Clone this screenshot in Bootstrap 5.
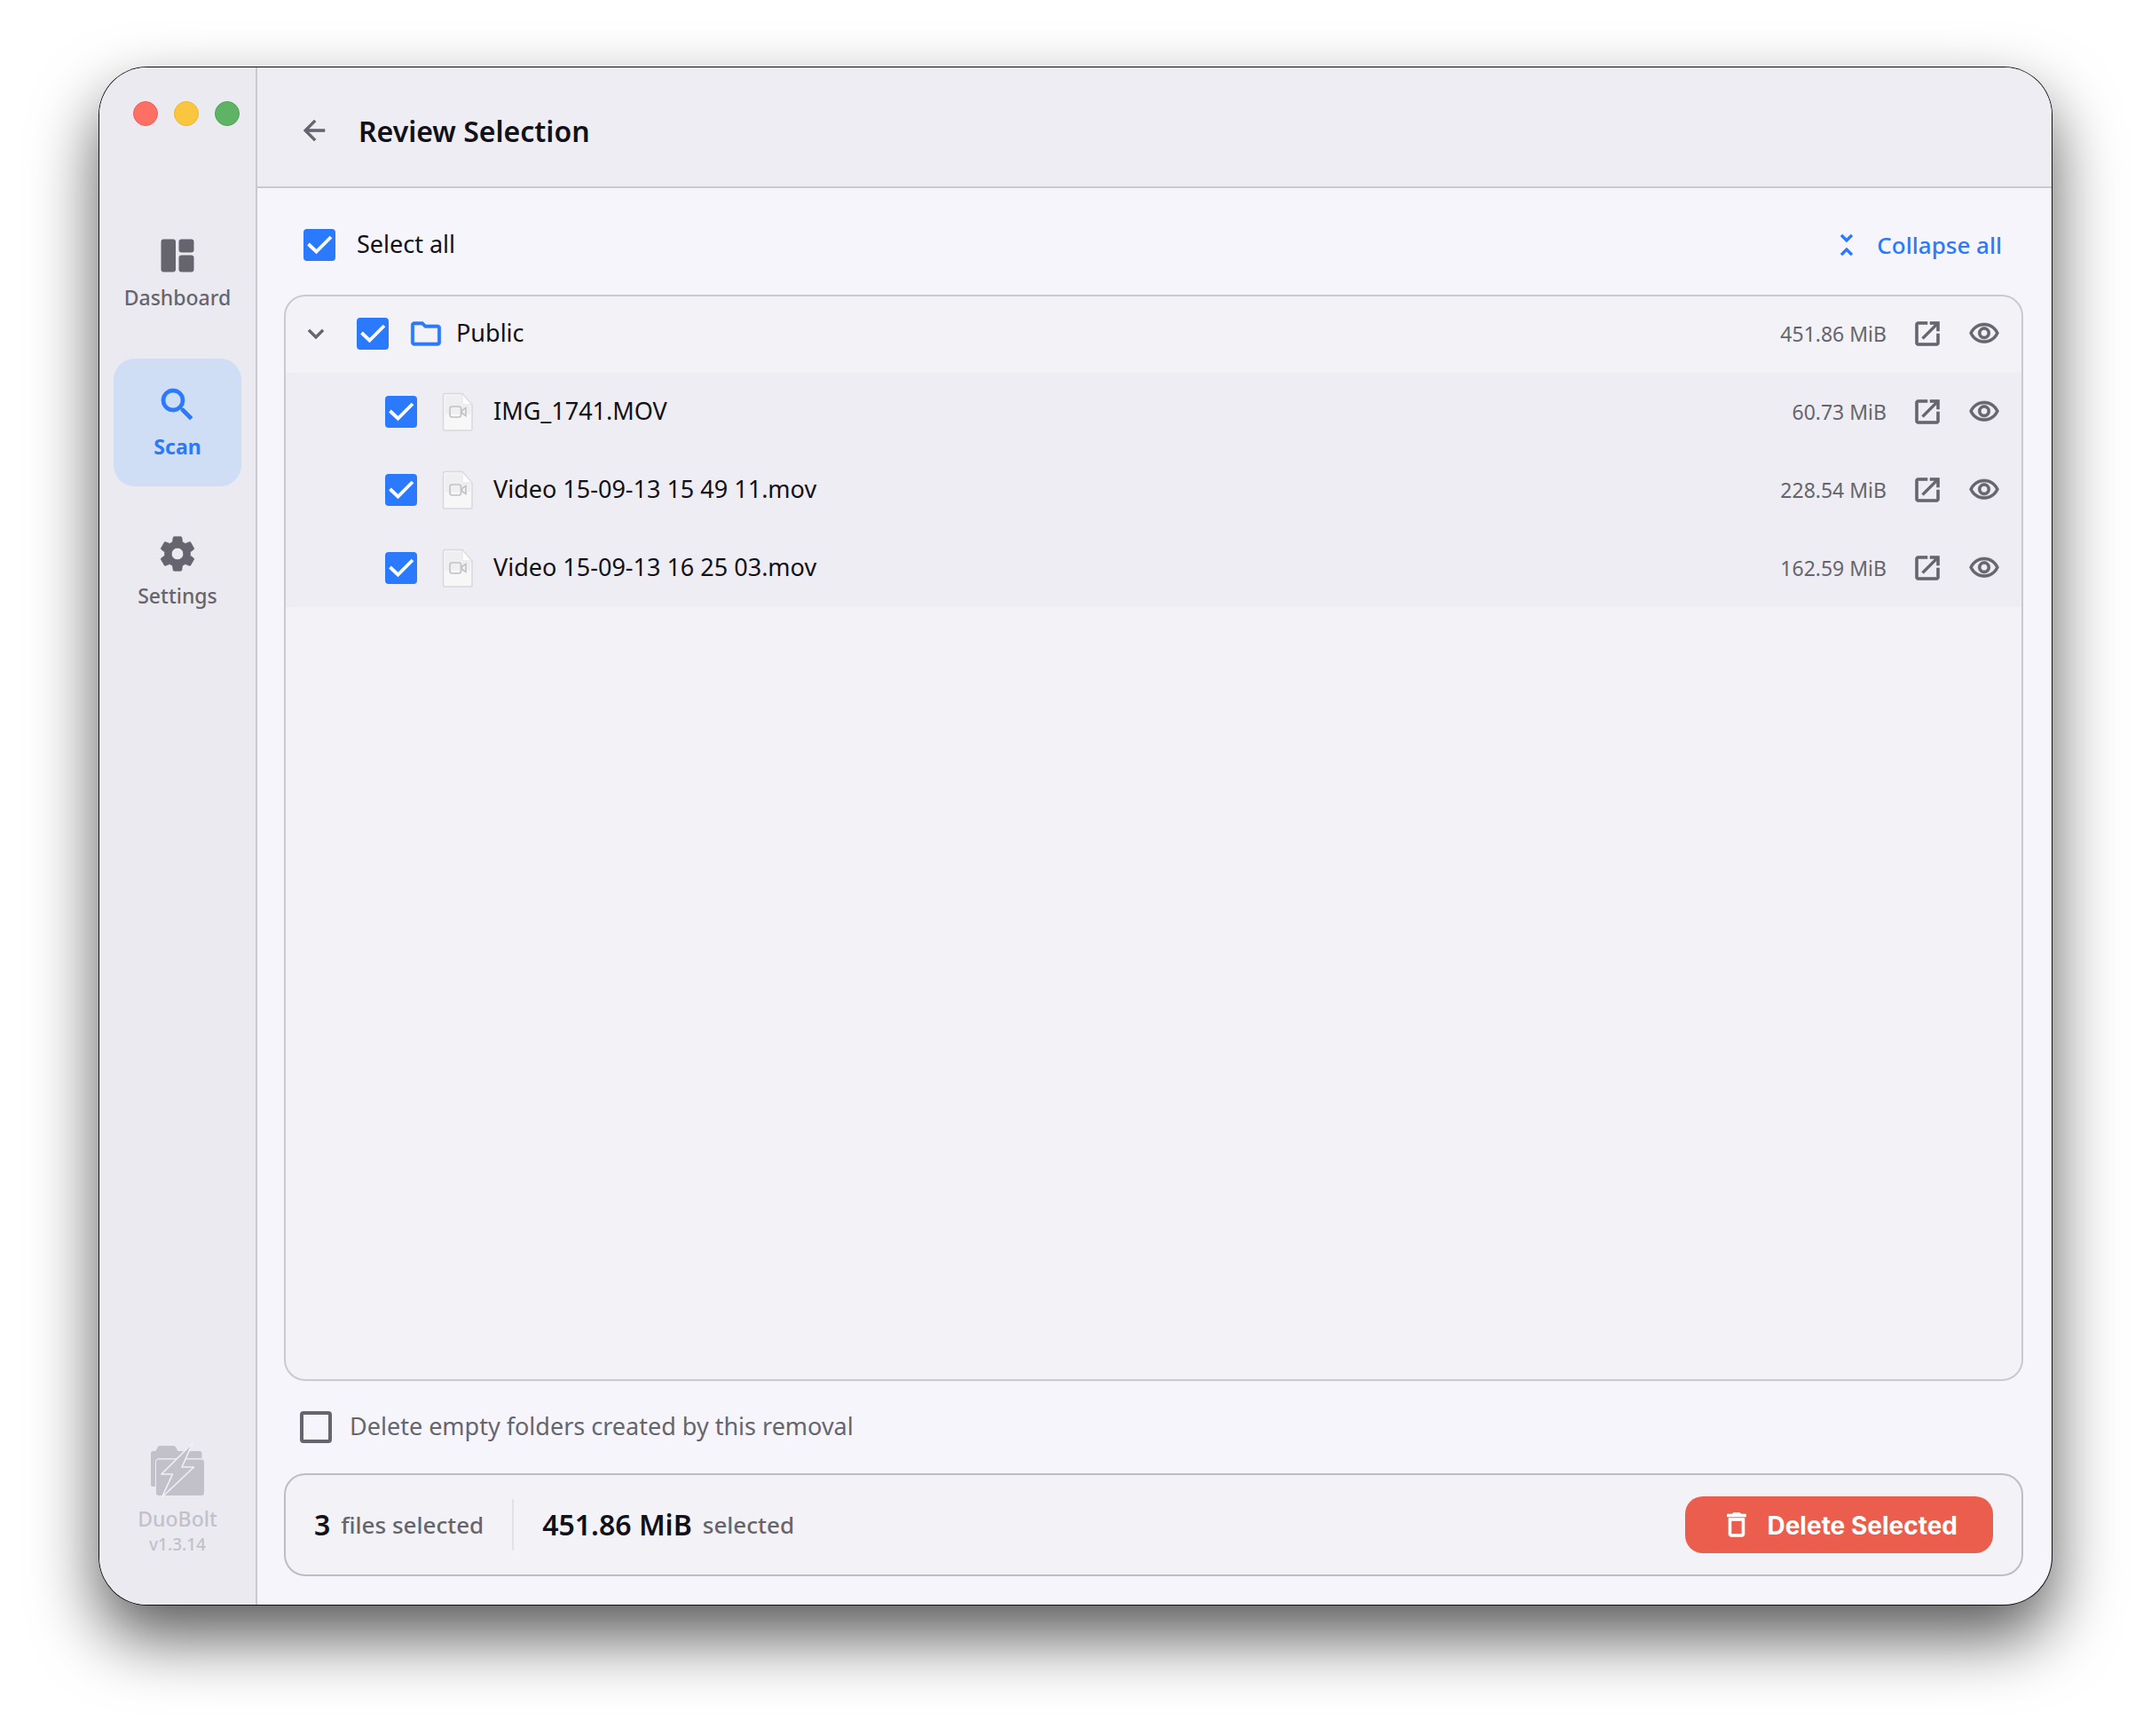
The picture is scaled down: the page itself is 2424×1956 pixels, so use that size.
<!DOCTYPE html>
<html lang="en">
<head>
<meta charset="utf-8">
<meta name="viewport" content="width=device-width, initial-scale=1">
<title>DuoBolt – Review Selection</title>
<link href="https://cdn.jsdelivr.net/npm/bootstrap@5.3.0/dist/css/bootstrap.min.css" rel="stylesheet">
<style>
  :root {
    --ink: #111117;
    --muted: #66656f;
    --blue: #2b79fd;
    --line: #c9c9cf;
    --pane: #f6f5fb;
    --panel: #f3f2f7;
    --bar: #eeedf3;
    --rail: #ebeaf1;
  }
  body {
    font-family: "Noto Sans", "Liberation Sans", sans-serif;
    font-size: 27px;
    line-height: 36px;
    color: var(--ink);
    background: #fff;
    padding: 76px 112px 148px;
  }
  .app-window {
    background: var(--pane);
    border-radius: 54px;
    box-shadow: 0 0 0 1px #111, 0 36px 76px rgba(0, 0, 0, .66);
  }
  .rail {
    width: 178px;
    background: var(--rail);
    border-right: 2px solid var(--line);
    padding: 38px 16px 32px;
  }
  .lights { gap: 18px; padding-left: 22px; margin-bottom: 94px; }
  .light { width: 28px; height: 28px; border-radius: 50%; border: 1px solid; }
  .light-close { background: #fe6f64; border-color: #ec5f57; }
  .light-min { background: #fac63f; border-color: #f0b429; }
  .light-max { background: #5fb365; border-color: #4aa552; }
  .rail-nav { gap: 24px; }
  .rail-link {
    height: 144px;
    gap: 6px;
    border-radius: 24px;
    color: var(--muted);
    font-size: 23px;
    line-height: 34px;
    font-weight: 500;
  }
  .rail-link.active { background: #cfddf5; color: var(--blue); font-weight: 700; }
  .brand { color: #c2c1c9; font-size: 23px; line-height: 34px; font-weight: 500; padding-bottom: 24px; }
  .brand-version { font-size: 19px; line-height: 24px; }
  .ico { width: 36px; height: 36px; fill: currentColor; stroke: currentColor; stroke-width: 0; flex: none; display: block; }
  .ico-strong { stroke-width: .4px; }
  .ico-lg { width: 48px; height: 48px; }
  .ico-md { width: 40px; height: 40px; color: var(--blue); }
  .top-bar {
    background: var(--bar);
    border-bottom: 2px solid var(--line);
    height: 136px;
    padding: 8px 46px 0;
    gap: 32px;
  }
  .top-bar h1 { font-size: 32px; line-height: 40px; font-weight: 600; padding-top: 2px; }
  .plain { border: 0; background: none; padding: 0; color: var(--muted); }
  .pane { padding: 32px 32px 32px 30px; }
  .tools { height: 64px; margin-bottom: 24px; padding: 0 24px 0 22px; }
  .tools label, .empty-opt label { padding-bottom: 2px; }
  .tick-row { gap: 24px; }
  .tick.form-check-input {
    width: 36px;
    height: 36px;
    margin: 0;
    flex: none;
    border: 4px solid var(--muted);
    border-radius: 4px;
    background-color: transparent;
    background-origin: border-box;
    background-size: 36px 36px;
  }
  .tick.form-check-input:checked {
    background-color: var(--blue);
    border-color: transparent;
    background-clip: border-box;
    background-image: url("data:image/svg+xml,%3csvg xmlns='http://www.w3.org/2000/svg' viewBox='0 0 36 36'%3e%3cpath d='M5.500 17l9 8.500L31 9' fill='none' stroke='%23fff' stroke-width='3.800'/%3e%3c/svg%3e");
  }
  .link-blue { color: var(--blue); font-size: 26px; font-weight: 500; gap: 16px; }
  .tree {
    background: var(--panel);
    border: 2px solid var(--line);
    border-radius: 24px;
    overflow: hidden;
  }
  .tree-row { height: 88px; padding: 0 24px 0 112px; }
  .tree-row.is-folder { height: 86px; padding-left: 16px; padding-bottom: 2px; }
  .tree-row.is-file { background: var(--bar); }
  .tree-tail { gap: 28px; color: var(--muted); font-size: 23px; }
  .lead-gap { gap: 28px; }
  .name-gap { gap: 14px; }
  .file-gap { gap: 22px; }
  .row-name { padding-bottom: 2px; }
  .folder-start { gap: 22px; }
  .doc-ico { width: 36px; height: 44px; flex: none; }
  .empty-opt { height: 104px; padding-left: 18px; gap: 20px; color: var(--muted); }
  .summary {
    background: var(--panel);
    border: 2px solid #bdbdc4;
    border-radius: 24px;
    height: 116px;
    padding: 0 32px;
  }
  .sum-num { font-size: 32px; line-height: 40px; font-weight: 600; }
  .sum-label { font-size: 26px; font-weight: 500; color: var(--muted); margin-left: 12px; }
  .sum-rule { width: 2px; height: 58px; background: #e3e2e9; margin: 0 32px; }
  .btn-delete {
    --bs-btn-color: #fff;
    --bs-btn-bg: #eb5d4c;
    --bs-btn-hover-color: #fff;
    --bs-btn-hover-bg: #dc4f3f;
    --bs-btn-border-width: 0;
    height: 64px;
    padding: 0 40px;
    gap: 16px;
    border-radius: 20px;
    font-family: Inter, "Liberation Sans", sans-serif;
    font-size: 28px;
    font-weight: 700;
  }
  .btn-delete span { padding-top: 2px; }
</style>
</head>
<body class="d-flex min-vh-100">
<svg class="d-none" aria-hidden="true">
  <symbol id="i-dash" viewBox="0 0 48 48"><rect x="5.500" y="5.500" width="16.500" height="37" rx="3"/><rect x="25.500" y="5.500" width="17" height="15" rx="3"/><rect x="25.500" y="23.500" width="17" height="19" rx="3"/></symbol>
  <symbol id="i-search" viewBox="0 0 24 24"><path d="M15.500 14h-.79l-.28-.27A6.471 6.471 0 0 0 16 9.500 6.500 6.500 0 1 0 9.500 16c1.610 0 3.090-.59 4.230-1.570l.27.28v.79l5 4.990L20.490 19l-4.990-5zm-6 0C7.010 14 5 11.990 5 9.500S7.010 5 9.500 5 14 7.010 14 9.500 11.990 14 9.500 14z"/></symbol>
  <symbol id="i-gear" viewBox="0 0 24 24"><path d="M19.140,12.940c0.040-0.300,0.060-0.610,0.060-0.940c0-0.320-0.020-0.640-0.070-0.940l2.030-1.580c0.180-0.140,0.230-0.410,0.120-0.610l-1.920-3.320c-0.120-0.220-0.370-0.290-0.590-0.220l-2.390,0.960c-0.500-0.380-1.030-0.700-1.620-0.940L14.400,2.810c-0.040-0.240-0.240-0.410-0.480-0.410h-3.840c-0.240,0-0.430,0.170-0.470,0.410L9.250,5.350C8.660,5.590,8.120,5.920,7.630,6.290L5.240,5.330c-0.220-0.080-0.470,0-0.590,0.220L2.740,8.870C2.620,9.080,2.660,9.340,2.860,9.480l2.030,1.580C4.840,11.360,4.800,11.690,4.800,12s0.020,0.640,0.070,0.940l-2.030,1.580c-0.180,0.140-0.230,0.410-0.120,0.610l1.920,3.320c0.120,0.220,0.370,0.290,0.590,0.220l2.390-0.960c0.500,0.380,1.030,0.700,1.620,0.940l0.360,2.540c0.050,0.240,0.240,0.410,0.480,0.410h3.840c0.240,0,0.440-0.170,0.470-0.410l0.360-2.540c0.590-0.240,1.130-0.560,1.620-0.940l2.390,0.960c0.220,0.080,0.470,0,0.590-0.220l1.920-3.320c0.120-0.220,0.070-0.470-0.120-0.610L19.140,12.940z M12,15.400a3.400,3.400 0 1 1 0-6.800a3.400,3.400 0 1 1 0,6.800z"/></symbol>
  <symbol id="i-back" viewBox="0 0 24 24"><path d="M20 11H7.830l5.590-5.590L12 4l-8 8 8 8 1.410-1.410L7.830 13H20v-2z"/></symbol>
  <symbol id="i-fold" viewBox="0 0 24 24"><path d="M7.410 18.590L8.830 20 12 16.830 15.170 20l1.410-1.410L12 14l-4.590 4.590zm9.180-13.180L15.170 4 12 7.170 8.830 4 7.410 5.410 12 10l4.590-4.590z"/></symbol>
  <symbol id="i-down" viewBox="0 0 24 24"><path d="M16.590 8.590L12 13.170 7.410 8.590 6 10l6 6 6-6z"/></symbol>
  <symbol id="i-folder" viewBox="0 0 24 24"><path d="M9.170 6l2 2H20v10H4V6h5.170M10 4H4c-1.100 0-1.990.9-1.990 2L2 18c0 1.100.9 2 2 2h16c1.100 0 2-.9 2-2V8c0-1.100-.9-2-2-2h-8l-2-2z"/></symbol>
  <symbol id="i-open" viewBox="0 0 24 24"><path d="M19 19H5V5h7V3H5c-1.110 0-2 .9-2 2v14c0 1.100.89 2 2 2h14c1.100 0 2-.9 2-2v-7h-2v7zM14 3v2h3.590l-9.830 9.830 1.410 1.410L19 6.410V10h2V3h-7z"/></symbol>
  <symbol id="i-eye" viewBox="0 0 24 24"><path d="M12 6c3.790 0 7.170 2.130 8.820 5.500C19.170 14.870 15.790 17 12 17s-7.170-2.130-8.820-5.500C4.830 8.130 8.210 6 12 6m0-2C7 4 2.730 7.110 1 11.500 2.730 15.890 7 19 12 19s9.270-3.110 11-7.500C21.270 7.110 17 4 12 4zm0 5c1.380 0 2.500 1.120 2.500 2.500S13.380 14 12 14s-2.500-1.120-2.500-2.500S10.620 9 12 9m0-2c-2.480 0-4.500 2.020-4.500 4.500S9.520 16 12 16s4.500-2.020 4.500-4.500S14.480 7 12 7z"/></symbol>
  <symbol id="i-trash" viewBox="0 0 24 24"><path d="M6 19c0 1.100.9 2 2 2h8c1.100 0 2-.9 2-2V7H6v12zM8 9h8v10H8V9zm7.500-5l-1-1h-5l-1 1H5v2h14V4h-3.500z"/></symbol>
  <symbol id="i-movie" viewBox="0 0 36 44">
    <path d="M3.500 1.500H23L34 14v27a2 2 0 0 1-2 2H3.500a2 2 0 0 1-2-2V3.500a2 2 0 0 1 2-2z" fill="#f7f7f8" stroke="#d9d8dc" stroke-width="1.500"/>
    <path d="M3.500 3.500H22v11l10 1v9H3.500z" fill="#efeff1"/>
    <path d="M23 2L33.500 14H24.500a1.500 1.500 0 0 1-1.500-1.500z" fill="#fdfdfe" stroke="#e0dfe3"/>
    <rect x="9" y="16" width="12.500" height="12" rx="2.500" fill="none" stroke="#c2c2c6" stroke-width="1.600"/>
    <path d="M22.500 20.500l4.500-3v9l-4.500-3z" fill="none" stroke="#c2c2c6" stroke-width="1.600"/>
  </symbol>
</svg>

<div class="app-window d-flex flex-grow-1 overflow-hidden">
  <aside class="rail d-flex flex-column flex-shrink-0">
    <div class="lights d-flex">
      <span class="light light-close"></span><span class="light light-min"></span><span class="light light-max"></span>
    </div>
    <nav class="rail-nav nav flex-column">
      <a href="#" class="rail-link d-flex flex-column align-items-center justify-content-center text-decoration-none"><svg class="ico ico-lg"><use href="#i-dash"/></svg>Dashboard</a>
      <a href="#" class="rail-link active d-flex flex-column align-items-center justify-content-center text-decoration-none" aria-current="page"><svg class="ico ico-lg ico-strong"><use href="#i-search"/></svg>Scan</a>
      <a href="#" class="rail-link d-flex flex-column align-items-center justify-content-center text-decoration-none"><svg class="ico ico-lg ico-strong"><use href="#i-gear"/></svg>Settings</a>
    </nav>
    <div class="brand mt-auto d-flex flex-column align-items-center">
      <svg width="60" height="66" viewBox="10 8 60 66" class="mb-1" aria-hidden="true">
        <path d="M10 21.500q0-2.500 2.500-2.500h2q1.500 0 2-2l.8-2q.8-2 3-2h15q2.200 0 3.200 2l2 4h24.500q2.500 0 2.500 2.500V27H20q-5 0-5 5v27h-2.500Q10 59 10 56.500z" fill="currentColor"/>
        <rect x="16" y="28.500" width="54" height="40.500" rx="3" fill="currentColor"/>
        <path d="M57 10L22 45h12.500L22.500 71 58.500 37H45z" fill="currentColor" stroke="#f1f0f6" stroke-width="1.600" stroke-linejoin="round"/>
      </svg>
      <span>DuoBolt</span>
      <span class="brand-version">v1.3.14</span>
    </div>
  </aside>

  <div class="d-flex flex-column flex-grow-1">
    <header class="top-bar d-flex align-items-center">
      <button type="button" class="plain" aria-label="Back"><svg class="ico ico-strong"><use href="#i-back"/></svg></button>
      <h1 class="mb-0">Review Selection</h1>
    </header>

    <main class="pane d-flex flex-column flex-grow-1">
      <div class="tools d-flex align-items-center justify-content-between">
        <div class="tick-row d-flex align-items-center">
          <input class="tick form-check-input" type="checkbox" id="all" checked>
          <label for="all">Select all</label>
        </div>
        <button type="button" class="plain link-blue d-flex align-items-center"><svg class="ico ico-strong"><use href="#i-fold"/></svg>Collapse all</button>
      </div>

      <div class="tree flex-grow-1">
        <div class="tree-row is-folder d-flex align-items-center justify-content-between">
          <div class="lead-gap d-flex align-items-center">
            <button type="button" class="plain" aria-label="Collapse folder"><svg class="ico ico-strong"><use href="#i-down"/></svg></button>
            <div class="folder-start d-flex align-items-center">
              <input class="tick form-check-input" type="checkbox" id="pub" checked>
              <label for="pub" class="name-gap d-flex align-items-center"><svg class="ico ico-md ico-strong"><use href="#i-folder"/></svg><span class="row-name">Public</span></label>
            </div>
          </div>
          <div class="tree-tail d-flex align-items-center">
            <span>451.86 MiB</span>
            <button type="button" class="plain" aria-label="Open"><svg class="ico ico-strong"><use href="#i-open"/></svg></button>
            <button type="button" class="plain" aria-label="Preview"><svg class="ico ico-strong"><use href="#i-eye"/></svg></button>
          </div>
        </div>
        <div class="tree-row is-file d-flex align-items-center justify-content-between">
          <div class="lead-gap d-flex align-items-center">
            <input class="tick form-check-input" type="checkbox" id="f1" checked>
            <label for="f1" class="file-gap d-flex align-items-center"><svg class="doc-ico"><use href="#i-movie"/></svg><span class="row-name">IMG_1741.MOV</span></label>
          </div>
          <div class="tree-tail d-flex align-items-center">
            <span>60.73 MiB</span>
            <button type="button" class="plain" aria-label="Open"><svg class="ico ico-strong"><use href="#i-open"/></svg></button>
            <button type="button" class="plain" aria-label="Preview"><svg class="ico ico-strong"><use href="#i-eye"/></svg></button>
          </div>
        </div>
        <div class="tree-row is-file d-flex align-items-center justify-content-between">
          <div class="lead-gap d-flex align-items-center">
            <input class="tick form-check-input" type="checkbox" id="f2" checked>
            <label for="f2" class="file-gap d-flex align-items-center"><svg class="doc-ico"><use href="#i-movie"/></svg><span class="row-name">Video 15-09-13 15 49 11.mov</span></label>
          </div>
          <div class="tree-tail d-flex align-items-center">
            <span>228.54 MiB</span>
            <button type="button" class="plain" aria-label="Open"><svg class="ico ico-strong"><use href="#i-open"/></svg></button>
            <button type="button" class="plain" aria-label="Preview"><svg class="ico ico-strong"><use href="#i-eye"/></svg></button>
          </div>
        </div>
        <div class="tree-row is-file d-flex align-items-center justify-content-between">
          <div class="lead-gap d-flex align-items-center">
            <input class="tick form-check-input" type="checkbox" id="f3" checked>
            <label for="f3" class="file-gap d-flex align-items-center"><svg class="doc-ico"><use href="#i-movie"/></svg><span class="row-name">Video 15-09-13 16 25 03.mov</span></label>
          </div>
          <div class="tree-tail d-flex align-items-center">
            <span>162.59 MiB</span>
            <button type="button" class="plain" aria-label="Open"><svg class="ico ico-strong"><use href="#i-open"/></svg></button>
            <button type="button" class="plain" aria-label="Preview"><svg class="ico ico-strong"><use href="#i-eye"/></svg></button>
          </div>
        </div>
      </div>

      <div class="empty-opt d-flex align-items-center">
        <input class="tick form-check-input" type="checkbox" id="empty">
        <label for="empty">Delete empty folders created by this removal</label>
      </div>

      <footer class="summary d-flex align-items-center justify-content-between">
        <div class="d-flex align-items-center">
          <div class="d-flex align-items-center"><span class="sum-num">3</span><span class="sum-label">files selected</span></div>
          <div class="sum-rule"></div>
          <div class="d-flex align-items-center"><span class="sum-num">451.86 MiB</span><span class="sum-label">selected</span></div>
        </div>
        <button type="button" class="btn btn-delete d-flex align-items-center"><svg class="ico ico-strong"><use href="#i-trash"/></svg><span>Delete Selected</span></button>
      </footer>
    </main>
  </div>
</div>
<script src="https://cdn.jsdelivr.net/npm/bootstrap@5.3.0/dist/js/bootstrap.bundle.min.js"></script>
</body>
</html>
